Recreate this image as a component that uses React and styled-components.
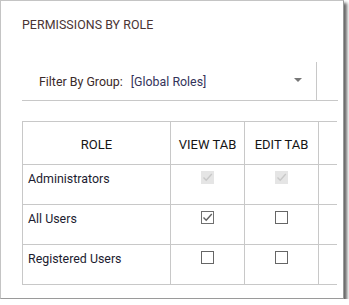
import React from "react";
import styled, { createGlobalStyle } from "styled-components";

const Global = createGlobalStyle`
  html, body { margin: 0; padding: 0; background: #ffffff; }
  body { font-family: Roboto, "Liberation Sans", sans-serif; }
`;

const Frame = styled.div`
  box-sizing: border-box;
  width: 344px;
  height: 299px;
  background: #fff;
  border: 1px solid #c4c4c4;
  border-right-color: #9a9a9a;
  border-bottom-color: #9a9a9a;
  box-shadow: 3px 3px 3px rgba(0, 0, 0, 0.6);
  padding: 17px 5px 0 21px;
  overflow: hidden;
`;

const Title = styled.h2`
  margin: 0;
  font-size: 12.4px;
  line-height: 14px;
  font-weight: 400;
  color: #4a3434;
  letter-spacing: 0.05px;
`;

const FilterBar = styled.div`
  margin-top: 30px;
  height: 38px;
  border-bottom: 1px solid #c8c8c8;
  display: flex;
`;

const Select = styled.div`
  box-sizing: border-box;
  width: 295px;
  height: 38px;
  border-right: 1px solid #c8c8c8;
  display: flex;
  align-items: center;
  padding: 1px 14px 0 17px;
  font-size: 12.4px;
`;

const Label = styled.span`
  color: #3b2a2a;
  margin-right: 8px;
`;

const Value = styled.span`
  color: #34345a;
  flex: 1;
`;

const Caret = styled.span`
  width: 0;
  height: 0;
  border-left: 4px solid transparent;
  border-right: 4px solid transparent;
  border-top: 4px solid #777;
  margin-top: -3px;
`;

const TableClip = styled.div`
  margin-top: 20px;
  width: 315px;
  overflow: hidden;
`;

const Table = styled.table`
  border-collapse: collapse;
  table-layout: fixed;
  width: 371px;
  font-size: 12.4px;
`;

const Col = styled.col`
  width: ${(p) => p.$w}px;
`;

const Th = styled.th`
  border: 1px solid #c8c8c8;
  height: 40px;
  padding: 2px 0 0;
  font-weight: 400;
  font-size: 13px;
  color: #151515;
  text-align: center;
  vertical-align: middle;
`;

const Td = styled.td`
  border: 1px solid #c8c8c8;
  height: 40px;
  box-sizing: border-box;
  padding: ${(p) => (p.$center ? "6px 0 0" : "7px 0 0 5px")};
  text-align: ${(p) => (p.$center ? "center" : "left")};
  vertical-align: top;
  color: #1c1c30;
  line-height: 14px;
`;

const Box = styled.span`
  box-sizing: border-box;
  display: inline-flex;
  align-items: center;
  justify-content: center;
  width: 13px;
  height: 13px;
  background: ${(p) => (p.$disabled ? "#e5e5e5" : "#fff")};
  border: ${(p) =>
    p.$disabled ? "1px solid #e5e5e5" : p.$checked ? "1.5px solid #707070" : "1px solid #666"};
  svg { display: block; }
`;

function Check({ checked, disabled }) {
  return (
    <Box $checked={checked} $disabled={disabled}>
      {checked && (
        <svg width="11" height="11" viewBox="0 0 11 11">
          <path
            d="M1.5 5.5 L4.2 8.2 L9.8 2"
            fill="none"
            stroke={disabled ? "#c8c8c8" : "#606060"}
            strokeWidth="1.4"
          />
        </svg>
      )}
    </Box>
  );
}

const rows = [
  { name: "Administrators", view: true, edit: true, disabled: true },
  { name: "All Users", view: true, edit: false },
  { name: "Registered Users", view: false, edit: false },
];

export default function App() {
  return (
    <>
      <Global />
      <Frame>
        <Title>PERMISSIONS BY ROLE</Title>
        <FilterBar>
          <Select>
            <Label>Filter By Group:</Label>
            <Value>[Global Roles]</Value>
            <Caret />
          </Select>
        </FilterBar>
        <TableClip>
          <Table>
            <colgroup>
              <Col $w={148} />
              <Col $w={74} />
              <Col $w={74} />
              <Col $w={75} />
            </colgroup>
            <thead>
              <tr>
                <Th>ROLE</Th>
                <Th>VIEW TAB</Th>
                <Th>EDIT TAB</Th>
                <Th></Th>
              </tr>
            </thead>
            <tbody>
              {rows.map((r) => (
                <tr key={r.name}>
                  <Td>{r.name}</Td>
                  <Td $center>
                    <Check checked={r.view} disabled={r.disabled} />
                  </Td>
                  <Td $center>
                    <Check checked={r.edit} disabled={r.disabled} />
                  </Td>
                  <Td $center></Td>
                </tr>
              ))}
            </tbody>
          </Table>
        </TableClip>
      </Frame>
    </>
  );
}
